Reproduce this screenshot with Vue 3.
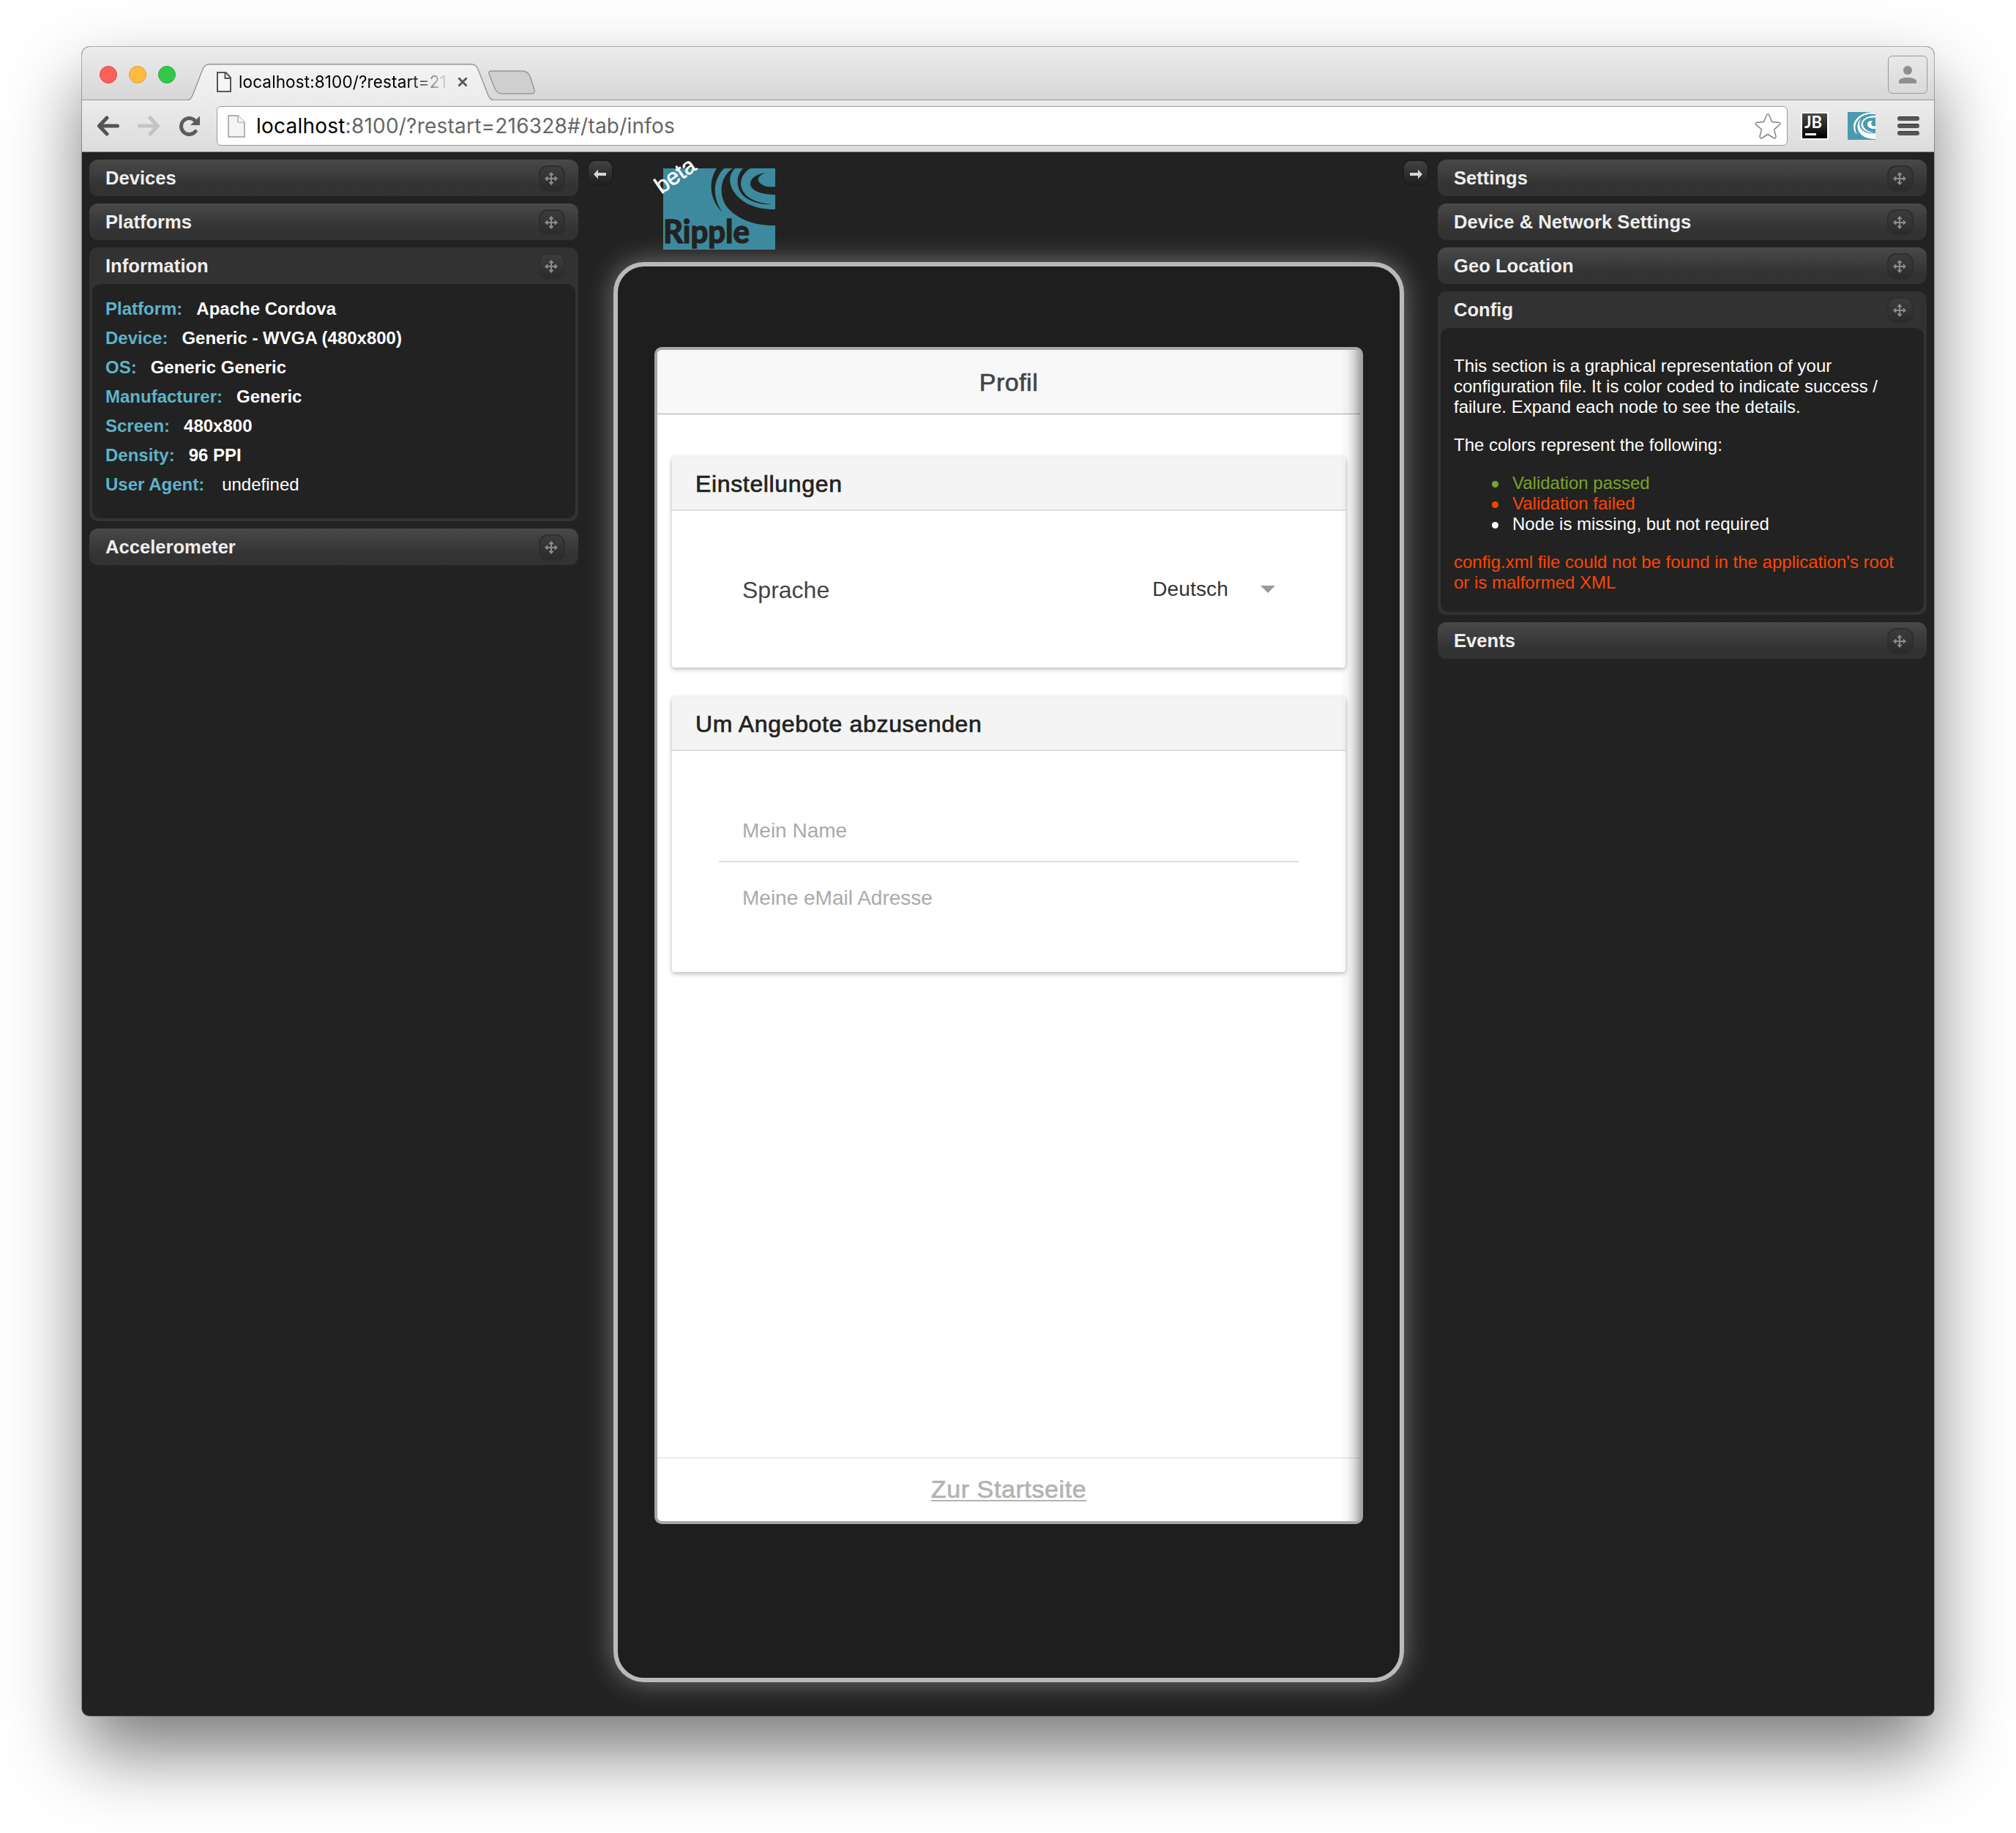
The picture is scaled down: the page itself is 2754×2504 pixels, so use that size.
<script setup>
import { h } from 'vue'

const devicePanels = [{ title: 'Devices' }, { title: 'Platforms' }, { title: 'Information', open: true }, { title: 'Accelerometer' }]

const settingPanels = [
  { title: 'Settings' },
  { title: 'Device & Network Settings' },
  { title: 'Geo Location' },
  { title: 'Config', open: true },
  { title: 'Events' },
]

const info = [
  ['Platform:', 'Apache Cordova'],
  ['Device:', 'Generic - WVGA (480x800)'],
  ['OS:', 'Generic Generic'],
  ['Manufacturer:', 'Generic'],
  ['Screen:', '480x800'],
  ['Density:', '96 PPI'],
  ['User Agent:', 'undefined'],
]

const MoveIcon = () =>
  h('svg', { width: 18, height: 18, viewBox: '0 0 18 18' }, [
    h('path', {
      d: 'M9 3V15M3 9H15',
      stroke: '#8b8b8b',
      'stroke-width': 2,
      fill: 'none',
    }),
    h('path', {
      d: 'M9 0L12 3.2V4.4H6V3.2ZM9 18L12 14.8V13.6H6V14.8ZM0 9L3.2 6H4.4V12H3.2ZM18 9L14.8 6H13.6V12H14.8Z',
      fill: '#8b8b8b',
    }),
  ])
</script>

<template>
  <div class="desktop">
    <div class="window">
      <header class="titlebar">
        <div class="lights">
          <i class="light red"></i>
          <i class="light yellow"></i>
          <i class="light green"></i>
        </div>
        <div class="tab">
          <svg class="tab-shape" width="420" height="51" viewBox="0 0 420 51">
            <defs>
              <linearGradient id="tabfill" x1="0" y1="0" x2="0" y2="1">
                <stop offset="0" stop-color="#f3f3f3" />
                <stop offset="1" stop-color="#ececec" />
              </linearGradient>
            </defs>
            <path d="M0 49.500C4 49.500 5.500 47 8 41L20 10C22.500 3 25 .8 31 .8H387C393 .8 395.500 3 398 10L410 41C412.500 47 414 49.500 418 49.500V51H0Z" fill="url(#tabfill)" />
            <path d="M0 49.500C4 49.500 5.500 47 8 41L20 10C22.500 3 25 .8 31 .8H387C393 .8 395.500 3 398 10L410 41C412.500 47 414 49.500 418 49.500" fill="none" stroke="#969696" stroke-width="1.400" />
          </svg>
          <svg class="tab-file" width="20" height="28" viewBox="0 0 20 28">
            <path d="M1 1H12.500L19 8V27H1Z M11.500 1V9H19" fill="#f6f6f6" stroke="#555" stroke-width="2" />
          </svg>
          <span class="tab-title">localhost:8100/?restart=21</span>
          <svg class="tab-close" width="14" height="14" viewBox="0 0 14 14">
            <path d="M1.500 1.500L12.500 12.500M12.500 1.500L1.500 12.500" stroke="#5a5a5a" stroke-width="3" />
          </svg>
        </div>
        <svg class="new-tab" width="64" height="33" viewBox="0 0 64 33">
          <path d="M4 1H46Q54 1 57 8L63 27Q64 32 59 32H20Q12 32 9 25L1 5Q0 1 4 1Z" fill="#cfcfcf" stroke="#979797" stroke-width="1.400" />
        </svg>
        <div class="user">
          <svg width="24" height="24" viewBox="0 0 24 24">
            <circle cx="12" cy="6" r="6" fill="#8f8f8f" />
            <path d="M0 24V21C0 17.500 6 16 12 16S24 17.500 24 21V24Z" fill="#8f8f8f" />
          </svg>
        </div>
      </header>

      <nav class="toolbar">
        <svg class="back" width="32" height="28" viewBox="0 0 32 28">
          <path d="M28.500 14H4M14 3L3.500 14L14 25" fill="none" stroke="#545454" stroke-width="5" stroke-linecap="round" stroke-linejoin="round" />
        </svg>
        <svg class="forward" width="32" height="28" viewBox="0 0 32 28">
          <path d="M3.500 14H28M18 3L28.500 14L18 25" fill="none" stroke="#c4c4c4" stroke-width="5" stroke-linecap="round" stroke-linejoin="round" />
        </svg>
        <svg class="reload" width="28" height="28" viewBox="0 0 28 28">
          <path d="M22 21.500A11 11 0 1 1 21 6.500" fill="none" stroke="#5c5c5c" stroke-width="5" stroke-linecap="round" />
          <path d="M28 .5V13H15Z" fill="#5c5c5c" />
        </svg>
        <div class="omnibox">
          <svg width="24" height="31" viewBox="0 0 24 31">
            <path d="M1 1H14L23 10V30H1Z" fill="#f4f4f4" stroke="#989898" stroke-width="1.400" />
            <path d="M14 1V10H23" fill="#fff" stroke="#989898" stroke-width="1.200" />
          </svg>
          <span class="url"><b>localhost</b>:8100/?restart=216328#/tab/infos</span>
          <svg class="star" width="36" height="35" viewBox="0 0 36 35">
            <path d="M16 2.500Q18 -.5 20 2.500L23.500 11.500L33 12.200Q36 13 34 15.500L26.500 22L29 31Q29 34.500 26 33.500L18 28.500L10 33.500Q7 34.500 7 31L9.500 22L2 15.500Q0 13 3 12.200L12.500 11.500Z" fill="#fff" stroke="#828282" stroke-width="1.500" />
          </svg>
        </div>
        <div class="jb"><span>JB</span><i></i></div>
        <svg class="swirl" width="38" height="38" viewBox="0 0 38 38">
          <rect width="38" height="38" fill="#4b9aae" />
          <g fill="#fff">
            <path d="M38 .5C20 -1 8 9 8 20C8 25 10 28 13 31C10 24 9 18 14 11C19 4 28 2 38 3Z" />
            <path d="M18 9C9 17 12 37 38 37V29C22 31 12 22 18 9Z" />
            <path d="M38 5C25 5 18 11 18.500 18C19 25 28 29 37 28C28 27 21 23 21 17C21 10 28 7 38 7.500Z" />
            <path d="M34 12C29 12 27 14 27 17C27 21 32 23.500 38 23V19.500C33 20 30 16 34 12Z" />
          </g>
        </svg>
        <div class="menu"><i></i><i></i><i></i></div>
      </nav>

      <main class="content">
        <aside class="column">
          <section v-for="p in devicePanels" :key="p.title" class="panel" :class="{ open: p.open }">
            <div class="head">
              <h2>{{ p.title }}</h2>
              <span class="grip"><MoveIcon /></span>
            </div>
            <div v-if="p.open" class="body info">
              <div v-for="row in info" :key="row[0]" class="row">
                <span class="label">{{ row[0] }}</span>
                <span class="value" :class="{ plain: row[1] === 'undefined' }">{{ row[1] }}</span>
              </div>
            </div>
          </section>
        </aside>

        <div class="center">
          <div class="topline">
            <span class="toggle">
              <svg width="18" height="14" viewBox="0 0 18 14"><path d="M0 7L6 .5V5H17V9H6V13.500Z" fill="#d4d4d4" /></svg>
            </span>
            <div class="logo">
              <svg width="153" height="111" viewBox="0 0 153 111">
                <rect width="153" height="111" fill="#3d8a9e" />
                <g fill="#222">
                  <path d="M73 0C62 17 62 42 81 60C68 42 66 18 83 0Z" />
                  <path d="M95 0C76 12 74 42 92 58C108 73 130 78 153 78V56C125 56 108 47 98 34C88 21 90 8 98 0Z" />
                  <path d="M109 0C98 12 100 28 110 38C120 46 134 50 149 49C132 48 118 43 111 34C103 24 104 9 119 0Z" />
                  <path d="M140 6C126 8 119 14 119 21C119 31 136 36 153 36V25C138 27 129 20 130 14C131 10 135 8 140 6Z" />
                </g>
                <text x="0" y="102" textLength="118" lengthAdjust="spacingAndGlyphs" class="ripple">Ripple</text>
              </svg>
              <span class="beta">beta</span>
            </div>
            <span class="toggle end">
              <svg width="18" height="14" viewBox="0 0 18 14"><path d="M18 7L12 .5V5H1V9H12V13.500Z" fill="#d4d4d4" /></svg>
            </span>
          </div>

          <div class="device">
            <div class="screen">
              <div class="bar">Profil</div>
              <div class="page">
                <div class="card">
                  <h3>Einstellungen</h3>
                  <div class="lang">
                    <span class="lang-label">Sprache</span>
                    <span class="lang-value">Deutsch</span>
                    <i class="caret"></i>
                  </div>
                </div>
                <div class="card">
                  <h3>Um Angebote abzusenden</h3>
                  <div class="fields">
                    <div class="field">Mein Name</div>
                    <div class="field">Meine eMail Adresse</div>
                  </div>
                </div>
              </div>
              <div class="footer"><a>Zur Startseite</a></div>
              <div class="shade"></div>
            </div>
          </div>
        </div>

        <aside class="column">
          <section v-for="p in settingPanels" :key="p.title" class="panel" :class="{ open: p.open }">
            <div class="head">
              <h2>{{ p.title }}</h2>
              <span class="grip"><MoveIcon /></span>
            </div>
            <div v-if="p.open" class="body config">
              <p>This section is a graphical representation of your<br />configuration file. It is color coded to indicate success /<br />failure. Expand each node to see the details.</p>
              <p>The colors represent the following:</p>
              <ul>
                <li class="ok">Validation passed</li>
                <li class="bad">Validation failed</li>
                <li>Node is missing, but not required</li>
              </ul>
              <p class="bad">config.xml file could not be found in the application's root<br />or is malformed XML</p>
            </div>
          </section>
        </aside>
      </main>
    </div>
  </div>
</template>

<style>
body {
  background: #fff;
}
</style>

<style scoped>
* {
  box-sizing: border-box;
}
.desktop {
  width: 2754px;
  height: 2504px;
  padding: 64px 112px 0;
  overflow: hidden;
  background: #fff;
  font-family: 'Liberation Sans', Arial, sans-serif;
}
.window {
  width: 2530px;
  height: 2280px;
  display: flex;
  flex-direction: column;
  border-radius: 10px;
  background: #222;
  box-shadow: 0 0 0 1px rgba(0, 0, 0, 0.28), 0 50px 100px rgba(0, 0, 0, 0.52);
}

/* title bar */
.titlebar {
  height: 73px;
  flex: none;
  display: flex;
  align-items: flex-end;
  background: linear-gradient(#ececec, #d7d7d7);
  border-radius: 10px 10px 0 0;
  border-bottom: 1px solid #969696;
}
.lights {
  display: flex;
  gap: 16px;
  margin-left: 24px;
  margin-bottom: 22px;
}
.light {
  width: 24px;
  height: 24px;
  border-radius: 50%;
}
.red {
  background: #fc605c;
  border: 1px solid #e0443e;
}
.yellow {
  background: #fdbc40;
  border: 1px solid #dea034;
}
.green {
  background: #34c84a;
  border: 1px solid #27aa35;
}
.tab {
  position: relative;
  width: 418px;
  height: 50px;
  margin-left: 16px;
  margin-bottom: -1px;
  padding-left: 40px;
  display: flex;
  align-items: center;
}
.tab-shape {
  position: absolute;
  left: 0;
  top: 0;
}
.tab-file,
.tab-title,
.tab-close {
  position: relative;
}
.tab-title {
  width: 288px;
  margin-left: 10px;
  overflow: hidden;
  white-space: nowrap;
  font: 22.5px/32px Inter, sans-serif;
  letter-spacing: 0.12px;
  color: #000;
  mask-image: linear-gradient(90deg, #000 230px, transparent 290px);
}
.tab-close {
  margin-left: 11px;
}
.new-tab {
  margin-left: -7px;
  margin-bottom: 7px;
}
.user {
  width: 54px;
  height: 52px;
  margin-left: auto;
  margin-right: 9px;
  margin-bottom: 8px;
  display: flex;
  align-items: center;
  justify-content: center;
  border: 1px solid #989898;
  border-radius: 6px;
}

/* toolbar */
.toolbar {
  height: 71px;
  flex: none;
  display: flex;
  align-items: center;
  background: linear-gradient(#ececec, #dcdcdc);
  border-bottom: 1px solid #858585;
}
.back {
  margin-left: 20px;
}
.forward {
  margin-left: 23px;
}
.reload {
  margin-left: 26px;
}
.omnibox {
  width: 2146px;
  height: 54px;
  margin-left: 23px;
  padding: 0 8px 0 14px;
  display: flex;
  align-items: center;
  background: #fff;
  border: 1px solid #999;
  border-radius: 6px;
}
.url {
  margin-left: 15px;
  font: 28px/40px Inter, sans-serif;
  letter-spacing: 0.22px;
  color: #666;
}
.url b {
  font-weight: 400;
  color: #000;
}
.star {
  margin-left: auto;
}
.jb {
  width: 38px;
  height: 38px;
  margin-left: 18px;
  padding: 2px 0 0 3px;
  border: 2px solid #fff;
  background: linear-gradient(#4a4a4a, #000);
  color: #fff;
  display: flex;
  flex-direction: column;
  font: 700 22px/20px Lato, sans-serif;
}
.jb i {
  width: 15px;
  height: 3px;
  margin: 5px 0 0 1px;
  background: #fff;
}
.swirl {
  margin-left: 26px;
}
.menu {
  width: 30px;
  margin-left: 30px;
  display: flex;
  flex-direction: column;
  gap: 4px;
}
.menu i {
  height: 6px;
  border-radius: 3px;
  background: #555;
  border-top: 1px solid #333;
}

/* content */
.content {
  flex: 1;
  display: flex;
  padding: 10px 10px 0;
}
.column {
  width: 668px;
  display: flex;
  flex-direction: column;
  gap: 10px;
}
.panel {
  border-radius: 12px;
  background: linear-gradient(#494949, #333 70%, #323232);
}
.panel.open {
  background: #323232;
  padding-bottom: 4px;
}
.head {
  height: 50px;
  padding: 0 18px 0 22px;
  display: flex;
  align-items: center;
  justify-content: space-between;
}
h2 {
  margin: 0;
  font-size: 25.6px;
  line-height: 30px;
  color: #eee;
}
.grip {
  width: 36px;
  height: 36px;
  margin-top: 2px;
  display: flex;
  align-items: center;
  justify-content: center;
  border: 2px solid #2e2e2e;
  border-radius: 12px;
  background: linear-gradient(#3c3c3c, #2b2b2b);
  padding-right: 2px;
}
.body {
  margin: 0 4px;
  border-radius: 12px;
  background: #222;
  color: #fff;
  font-size: 24px;
}
.info {
  height: 320px;
  padding: 14px 18px 0;
}
.row {
  height: 40px;
  line-height: 40px;
  display: flex;
  font-weight: 700;
}
.label {
  color: #5fb3c9;
  margin-right: 19px;
}
.value.plain {
  font-weight: 400;
  margin-left: 5px;
}
.config {
  height: 388px;
  padding: 14px 18px 0;
  line-height: 28px;
  white-space: nowrap;
  overflow: hidden;
}
.config p,
.config ul {
  margin: 24px 0 0;
}
.config ul {
  padding-left: 56px;
  list-style: none;
}
.config li {
  display: flex;
  align-items: center;
}
.config li::before {
  content: '';
  width: 9px;
  height: 9px;
  margin: 2px 19px 0 -4px;
  border-radius: 50%;
  background: currentColor;
}
.ok {
  color: #7ba428;
}
.bad {
  color: #ff4500;
}

.center {
  width: 1174px;
}
.topline {
  height: 140px;
  display: flex;
  padding: 2px 14px 0;
}
.toggle {
  width: 32px;
  height: 32px;
  display: flex;
  align-items: center;
  justify-content: center;
  padding-top: 4px;
  border-radius: 9px;
  background: linear-gradient(#424242, #1f1f1f);
  box-shadow: 0 0 0 2px #1e1e1e;
}
.toggle.end {
  margin-left: auto;
}
.logo {
  position: relative;
  width: 153px;
  height: 111px;
  margin: 10px 0 0 70px;
}
.logo svg {
  display: block;
}
.ripple {
  font: 700 44px Lato, sans-serif;
  fill: #222;
  stroke: #222;
  stroke-width: 1.5px;
  stroke-linejoin: round;
}
.beta {
  position: absolute;
  left: -14px;
  top: -6px;
  font-size: 31px;
  line-height: 31px;
  color: #fff;
  -webkit-text-stroke: 0.6px #fff;
  transform: rotate(-35deg);
}

/* emulated phone */
.device {
  width: 1080px;
  height: 1940px;
  margin-left: 48px;
  padding: 110px 50px 0;
  border: 6px solid #bababa;
  border-radius: 42px;
  background: #1e1e1e;
  box-shadow: 0 0 36px rgba(255, 255, 255, 0.38);
}
.screen {
  position: relative;
  width: 968px;
  height: 1608px;
  display: flex;
  flex-direction: column;
  border: 4px solid #a6a6a6;
  border-radius: 10px;
  background: #fff;
  overflow: hidden;
}
.bar {
  height: 88px;
  flex: none;
  line-height: 89px;
  text-align: center;
  background: #f8f8f8;
  border-bottom: 1px solid #a9a9a9;
  font-size: 34px;
  letter-spacing: 0.5px;
  color: #444;
  -webkit-text-stroke: 0.7px #444;
}
.page {
  flex: 1;
  padding: 58px 20px 0;
}
.card {
  margin-bottom: 40px;
  height: 288px;
  border-radius: 4px;
  background: #fff;
  box-shadow: 0 2px 6px rgba(0, 0, 0, 0.3);
}
.card + .card {
  height: 376px;
}
h3 {
  margin: 0;
  height: 74px;
  padding-left: 32px;
  border-radius: 4px 4px 0 0;
  background: #f4f4f4;
  border-bottom: 2px solid #ddd;
  font-size: 32px;
  font-weight: 400;
  line-height: 74px;
  letter-spacing: 0.65px;
  color: #222;
  -webkit-text-stroke: 0.7px #222;
}
.lang {
  height: 214px;
  display: flex;
  align-items: center;
  padding: 0 96px;
}
.lang-label {
  padding-top: 3px;
  font-size: 32px;
  color: #444;
}
.lang-value {
  margin: 0 44px 0 auto;
  font-size: 28px;
  letter-spacing: 0.15px;
  color: #333;
}
.caret {
  border: 10px solid transparent;
  border-top-color: #999;
  border-bottom: 0;
}
.fields {
  padding: 60px 64px 0;
}
.field {
  height: 92px;
  padding-left: 32px;
  line-height: 98px;
  font-size: 28px;
  color: #aaa;
}
.field:first-child {
  border-bottom: 2px solid #ddd;
}
.footer {
  height: 87px;
  flex: none;
  border-top: 1px solid #d8d8d8;
  text-align: center;
  font-size: 34px;
  line-height: 84px;
  letter-spacing: 0.6px;
}
.footer a {
  color: #b2b2b2;
  text-decoration: underline;
  text-decoration-thickness: 2px;
  text-underline-offset: 3px;
  -webkit-text-stroke: 0.7px #b2b2b2;
}
.shade {
  position: absolute;
  top: 0;
  right: 0;
  bottom: 0;
  width: 28px;
  background: linear-gradient(90deg, transparent, rgba(0, 0, 0, 0.04) 40%, rgba(0, 0, 0, 0.14) 70%, rgba(0, 0, 0, 0.32));
}
</style>
